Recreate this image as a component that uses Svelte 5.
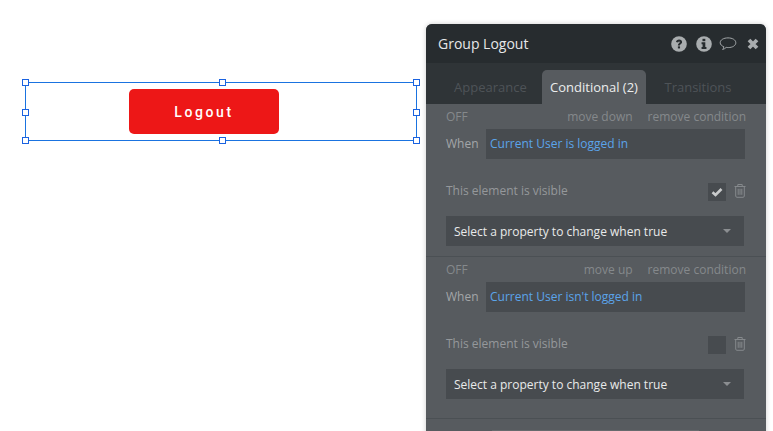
<script lang="ts">
	const conditions = [
		{ move: 'move down', expr: 'Current User is logged in', checked: true },
		{ move: 'move up', expr: "Current User isn't logged in", checked: false }
	];
	const handles = ['tl', 'tc', 'tr', 'ml', 'mr', 'bl', 'bc', 'br'];
</script>

<div class="canvas">
	<div class="selection">
		<button type="button" class="logout">Logout</button>
		{#each handles as h}
			<span class="handle {h}"></span>
		{/each}
	</div>

	<div class="panel">
		<header class="head">
			<span class="title">Group Logout</span>
			<div class="head-icons">
				<svg class="help" width="16" height="16" viewBox="0 0 17 17">
					<circle cx="8.500" cy="8.500" r="8.300" fill="#a9adaf" />
					<path d="M5.300 6.500c.2-1.800 1.500-2.700 3.300-2.700 1.900 0 3.200 1.100 3.200 2.600 0 1.200-.7 1.800-1.500 2.300-.6.400-.8.700-.8 1.300H7.300c0-1.200.4-1.800 1.200-2.400.6-.4.9-.6.9-1.100 0-.4-.3-.7-.8-.7s-.9.300-1 1z" fill="#272c2f" />
					<rect x="7.300" y="11" width="2.300" height="2.200" fill="#272c2f" />
				</svg>
				<svg class="info" width="16" height="16" viewBox="0 0 17 17">
					<circle cx="8.500" cy="8.500" r="8.300" fill="#a9adaf" />
					<rect x="6.900" y="3" width="3" height="2.500" fill="#272c2f" />
					<path d="M5.900 6.700h4v5h1.200v2H5.900v-2h1.100v-3H5.900z" fill="#272c2f" />
				</svg>
				<svg class="bubble" width="18" height="16" viewBox="0 0 19 17">
					<path d="M9.500 2C14 2 17.800 4 17.800 7.200c0 3-3.600 5.100-8 5.100-.9 0-1.500-.1-2.200-.2-1 1-2.300 1.900-3.800 2.200.7-.8 1.200-1.700 1.300-2.900C2.800 10.500 1.200 9 1.200 7.200 1.200 4 5 2 9.500 2z" fill="none" stroke="#a9adaf" stroke-width="1" />
				</svg>
				<svg width="12" height="12" viewBox="0 0 12 12">
					<path d="M2 2l8 8M10 2l-8 8" stroke="#a9adaf" stroke-width="3.800" />
				</svg>
			</div>
		</header>

		<nav class="tabs">
			<span class="tab">Appearance</span>
			<span class="tab active">Conditional (2)</span>
			<span class="tab">Transitions</span>
		</nav>

		<div class="body">
			{#each conditions as c}
				<section class="cond">
					<div class="row-top">
						<span class="off">OFF</span>
						<span class="move">{c.move}</span>
						<span class="remove">remove condition</span>
					</div>
					<div class="row-when">
						<span class="when">When</span>
						<div class="expr">{c.expr}</div>
					</div>
					<div class="row-vis">
						<span>This element is visible</span>
						<div class="check">
							{#if c.checked}
								<svg width="12" height="10" viewBox="0 0 12 10">
									<path d="M1.500 5.200l3 2.800 6-6" fill="none" stroke="#c9cbcc" stroke-width="2.600" />
								</svg>
							{/if}
						</div>
						<svg class="trash" width="12" height="15" viewBox="0 0 12 15">
							<path d="M.5 3.500h11M3.800 3.500V1.500h4.400v2M1.700 3.500v9.500c0 .7.500 1.300 1.200 1.300h6.200c.7 0 1.200-.6 1.200-1.300V3.500M4.200 5.800v6M6 5.800v6M7.800 5.800v6" fill="none" stroke="#85898c" stroke-width="1" />
						</svg>
					</div>
					<div class="select">
						<span>Select a property to change when true</span>
						<i class="caret"></i>
					</div>
				</section>
			{/each}
			<div class="next"></div>
		</div>
	</div>
</div>

<style>
	:global(body) {
		margin: 0;
		background: #fff;
		overflow: hidden;
	}

	.canvas {
		position: relative;
		width: 773px;
		height: 431px;
		overflow: hidden;
		font-family: 'Open Sans', sans-serif;
	}

	.selection {
		position: absolute;
		left: 25px;
		top: 82px;
		width: 390px;
		height: 57px;
		border: 1px solid #1a73e0;
	}

	.logout {
		position: absolute;
		left: 103px;
		top: 6px;
		width: 150px;
		height: 45px;
		border: none;
		border-radius: 5px;
		background: #ed1717;
		color: #fff;
		font-family: Roboto, sans-serif;
		font-size: 14px;
		font-weight: 500;
		letter-spacing: 2.6px;
		padding: 1px 0 0;
	}

	.handle {
		position: absolute;
		width: 5px;
		height: 5px;
		background: #fff;
		border: 1px solid #1a62e0;
	}
	.tl, .tc, .tr { top: -4px; }
	.ml, .mr { top: 26px; }
	.bl, .bc, .br { bottom: -4px; }
	.tl, .ml, .bl { left: -4px; }
	.tc, .bc { left: 193px; }
	.tr, .mr, .br { right: -4px; }

	.panel {
		position: absolute;
		left: 426px;
		top: 24px;
		width: 340px;
		height: 430px;
		border-radius: 6px 6px 0 0;
		overflow: hidden;
		background: #575b5f;
		box-shadow: 0 0 5px rgba(0, 0, 0, 0.2);
	}

	.head {
		height: 39px;
		box-sizing: border-box;
		padding: 0 7px 0 12px;
		display: flex;
		align-items: center;
		justify-content: space-between;
		background: #272c2f;
	}

	.title {
		color: #e6e7e8;
		font-size: 14px;
	}

	.head-icons {
		display: flex;
		align-items: center;
	}

	.help {
		margin-right: 9px;
	}

	.info {
		margin-right: 7px;
	}

	.bubble {
		margin-right: 10px;
	}

	.tabs {
		height: 41px;
		box-sizing: border-box;
		padding: 7px 0 0 16px;
		display: flex;
		background: #2f3437;
	}

	.tab {
		width: 96px;
		margin-right: 4px;
		border-radius: 5px 5px 0 0;
		text-align: center;
		line-height: 35px;
		font-size: 13px;
		color: #4e5357;
		white-space: nowrap;
	}

	.tab:first-child {
		width: 96px;
		text-align: left;
		padding-left: 12px;
		box-sizing: border-box;
	}

	.tab.active {
		width: 104px;
		color: #eceded;
		background: #575b5f;
	}

	.cond {
		box-sizing: border-box;
		height: 153px;
		padding: 0 20px;
		border-bottom: 1px solid #4b5054;
	}

	.cond:last-of-type {
		height: 162px;
	}

	.row-top {
		height: 25px;
		display: flex;
		align-items: center;
		font-size: 12px;
		color: #85898c;
	}

	.off {
		flex: 1;
	}

	.remove {
		margin-left: 15px;
	}

	.row-when {
		height: 30px;
		display: flex;
		align-items: center;
	}

	.when {
		width: 40px;
		padding-bottom: 2px;
		font-size: 12px;
		color: #a3a6a8;
	}

	.expr {
		width: 259px;
		height: 30px;
		margin-right: -1px;
		box-sizing: border-box;
		padding-left: 4px;
		line-height: 29px;
		font-size: 12px;
		color: #5ba4ea;
		background: #474b4f;
	}

	.row-vis {
		height: 57px;
		box-sizing: border-box;
		padding-top: 9px;
		display: flex;
		align-items: center;
		font-size: 12px;
		color: #95989b;
	}

	.row-vis > span {
		flex: 1;
		padding-bottom: 4px;
	}

	.check {
		width: 18px;
		height: 18px;
		margin-right: 8px;
		display: flex;
		align-items: center;
		justify-content: center;
		background: #474b4f;
	}

	.trash {
		margin-bottom: 4px;
	}

	.select {
		width: 298px;
		height: 30px;
		box-sizing: border-box;
		padding: 0 13px 0 8px;
		display: flex;
		align-items: center;
		justify-content: space-between;
		font-size: 12px;
		color: #e9eaea;
		background: #474b4f;
	}

	.caret {
		width: 0;
		height: 0;
		border-left: 4px solid transparent;
		border-right: 4px solid transparent;
		border-top: 4px solid #8b8e91;
	}

	.next {
		width: 207px;
		height: 12px;
		margin: 11px 0 0 66px;
		background: #666a6d;
	}
</style>
